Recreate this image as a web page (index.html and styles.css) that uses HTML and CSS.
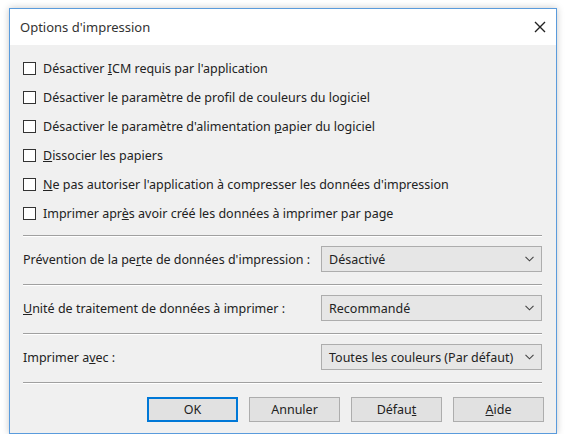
FILE: index.html
```html
<!DOCTYPE html>
<html lang="fr">
<head>
<meta charset="utf-8">
<title>Options d'impression</title>
<link rel="stylesheet" href="styles.css">
</head>
<body>
<div class="window">
  <div class="titlebar">
    <span class="title">Options d'impression</span>
    <span class="close">
      <svg width="12" height="12" viewBox="0 0 12 12"><path d="M1 1 L11 11 M11 1 L1 11" stroke="#222" stroke-width="1.4" fill="none"/></svg>
    </span>
  </div>
  <div class="body">
    <div class="checks">
      <label class="row"><span class="box"></span><span>Désactiver <u>I</u>CM requis par l'application</span></label>
      <label class="row"><span class="box"></span><span>Désactiver le paramètre de profil de couleurs du logiciel</span></label>
      <label class="row"><span class="box"></span><span>Désactiver le paramètre d'alimentation <u>p</u>apier du logiciel</span></label>
      <label class="row"><span class="box"></span><span><u>D</u>issocier les papiers</span></label>
      <label class="row"><span class="box"></span><span><u>N</u>e pas autoriser l'application à compresser les données d'impression</span></label>
      <label class="row"><span class="box"></span><span>Imprimer apr<u>è</u>s avoir créé les données à imprimer par page</span></label>
    </div>
    <div class="sep"></div>
    <div class="field">
      <span class="label">Prévention de la pe<u>r</u>te de données d'impression :</span>
      <div class="select"><span>Désactivé</span><svg class="chev" width="9" height="6" viewBox="0 0 9 6"><path d="M0.5 0.8 L4.5 4.8 L8.5 0.8" stroke="#444" stroke-width="1.1" fill="none"/></svg></div>
    </div>
    <div class="sep"></div>
    <div class="field">
      <span class="label"><u>U</u>nité de traitement de données à imprimer :</span>
      <div class="select"><span>Recommandé</span><svg class="chev" width="9" height="6" viewBox="0 0 9 6"><path d="M0.5 0.8 L4.5 4.8 L8.5 0.8" stroke="#444" stroke-width="1.1" fill="none"/></svg></div>
    </div>
    <div class="sep"></div>
    <div class="field">
      <span class="label">Imprimer a<u>v</u>ec :</span>
      <div class="select"><span>Toutes les couleurs (Par défaut)</span><svg class="chev" width="9" height="6" viewBox="0 0 9 6"><path d="M0.5 0.8 L4.5 4.8 L8.5 0.8" stroke="#444" stroke-width="1.1" fill="none"/></svg></div>
    </div>
    <div class="sep"></div>
    <div class="buttons">
      <button class="btn default">OK</button>
      <button class="btn">Annuler</button>
      <button class="btn">Défau<u>t</u></button>
      <button class="btn"><u>A</u>ide</button>
    </div>
  </div>
</div>
</body>
</html>
```

FILE: styles.css
```css
* { box-sizing: border-box; }
html, body { margin: 0; padding: 0; background: #ffffff; }
body {
  font-family: "Noto Sans", "Open Sans", sans-serif;
  font-size: 12.5px;
  color: #222;
}
.window {
  margin: 8px 0 0 9px;
  width: 548px;
  height: 426px;
  border: 1px solid #5a9bdc;
  box-shadow: 0 0 7px rgba(0,0,0,0.22);
  background: #fff;
  display: flex;
  flex-direction: column;
}
.titlebar {
  height: 36px;
  flex: none;
  display: flex;
  align-items: center;
  justify-content: space-between;
  padding: 0 10px 0 10px;
  background: #fff;
}
.title { font-size: 13px; color: #333; }
.close { display: flex; align-items: center; }
.body {
  flex: 1;
  background: #f0f0f0;
  padding: 9px 14px 0 13px;
  display: flex;
  flex-direction: column;
}
.checks { display: flex; flex-direction: column; }
.row {
  height: 29px;
  display: flex;
  align-items: center;
  gap: 7px;
}
.box {
  width: 13px;
  height: 13px;
  border: 1px solid #333;
  background: #fff;
  flex: none;
}
.sep {
  height: 2px;
  border-top: 1px solid #a0a0a0;
  border-bottom: 1px solid #fff;
  flex: none;
}
.checks + .sep { margin-top: 7px; }
.field {
  display: flex;
  align-items: center;
  justify-content: space-between;
  padding: 9px 0 12px 0;
}
.select {
  width: 221px;
  height: 26px;
  border: 1px solid #adadad;
  background: #e6e6e6;
  display: flex;
  align-items: center;
  justify-content: space-between;
  padding: 0 7px 0 7px;
}
.buttons {
  display: flex;
  justify-content: flex-end;
  gap: 11px;
  margin-top: 13px;
  margin-right: -2px;
}
.btn {
  width: 91px;
  height: 25px;
  border: 1px solid #adadad;
  background: #e1e1e1;
  font-family: inherit;
  font-size: 12.5px;
  color: #222;
  padding: 0;
}
.btn.default { border: 2px solid #0078d7; }
u { text-decoration: underline; text-underline-offset: 1px; }
```
